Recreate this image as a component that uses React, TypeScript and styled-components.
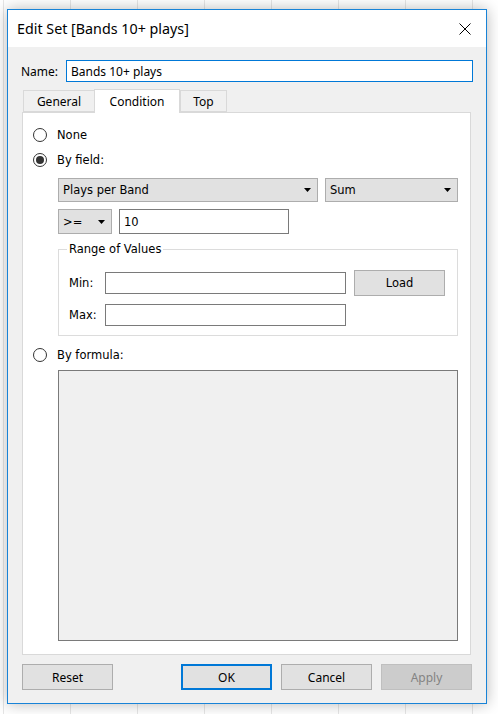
import styled, { createGlobalStyle } from "styled-components";

const GlobalStyle = createGlobalStyle`
  html, body {
    margin: 0;
    padding: 0;
    background: #ffffff;
  }
  * {
    box-sizing: border-box;
  }
`;

const UI_FONT = `"Noto Sans", "Open Sans", sans-serif`;
const FORM_FONT = `"DejaVu Sans", "Liberation Sans", sans-serif`;

const Page = styled.div`
  width: 498px;
  height: 714px;
  padding: 9px 0 0 7px;
  overflow: hidden;
  background-color: #ffffff;
  background-image: repeating-linear-gradient(
    to right,
    transparent 0,
    transparent 3px,
    #e6e6e6 3px,
    #e6e6e6 4px,
    transparent 4px,
    transparent 67px
  );
`;

const Dialog = styled.div`
  width: 480px;
  height: 695px;
  border: 1px solid #1883d7;
  background: #f0f0f0;
  box-shadow: 0 0 14px rgba(0, 0, 0, 0.28);
  display: flex;
  flex-direction: column;
`;

const TitleBar = styled.div`
  height: 37px;
  flex: none;
  background: #ffffff;
  display: flex;
  align-items: center;
  justify-content: space-between;
  padding: 0 15px 0 9px;
  font-family: ${UI_FONT};
  font-size: 14.3px;
  color: #000;
`;

const CloseButton = styled.div`
  width: 12px;
  height: 12px;
  display: flex;
`;

const Body = styled.div`
  flex: 1;
  display: flex;
  flex-direction: column;
  padding: 13px 14px 13px 14px;
`;

const NameRow = styled.div`
  height: 22px;
  display: flex;
  align-items: center;
  margin: 0 -1px 0 -1px;
  font-family: ${UI_FONT};
  font-size: 12px;
`;

const NameLabel = styled.label`
  width: 45px;
  flex: none;
`;

const NameInput = styled.div`
  flex: 1;
  height: 22px;
  border: 1px solid #0078d7;
  background: #fff;
  display: flex;
  align-items: center;
  padding-left: 4px;
`;

const TabStrip = styled.div`
  margin-top: 6px;
  height: 24px;
  display: flex;
  align-items: flex-end;
  padding-left: 1px;
  font-family: ${UI_FONT};
  font-size: 12px;
`;

const Tab = styled.div<{ $active?: boolean; $width: number }>`
  width: ${(p) => p.$width}px;
  height: ${(p) => (p.$active ? 24 : 22)}px;
  display: flex;
  align-items: center;
  justify-content: center;
  background: ${(p) => (p.$active ? "#ffffff" : "#f0f0f0")};
  border: 1px solid #d9d9d9;
  border-bottom: ${(p) => (p.$active ? "none" : "1px solid #d9d9d9")};
  margin-left: ${(p) => (p.$active ? -1 : 0)}px;
  margin-bottom: ${(p) => (p.$active ? -1 : 0)}px;
  position: relative;
  z-index: ${(p) => (p.$active ? 2 : 1)};
  padding-top: ${(p) => (p.$active ? 0 : 1)}px;
`;

const Panel = styled.div`
  height: 543px;
  margin-right: 1px;
  background: #ffffff;
  border: 1px solid #d9d9d9;
  display: flex;
  flex-direction: column;
  padding: 12px 12px 13px 11px;
  font-family: ${FORM_FONT};
  font-size: 11.5px;
  color: #000;
`;

const RadioRow = styled.label<{ $top?: number }>`
  height: 20px;
  margin-top: ${(p) => p.$top ?? 0}px;
  display: flex;
  align-items: center;
  gap: 10px;
`;

const RadioCircle = styled.span<{ $checked?: boolean }>`
  width: 14px;
  height: 14px;
  flex: none;
  border-radius: 50%;
  border: 1px solid #333333;
  background: #ffffff;
  display: flex;
  align-items: center;
  justify-content: center;
  margin-left: -1px;
  margin-right: 0;
  &::after {
    content: "";
    display: ${(p) => (p.$checked ? "block" : "none")};
    width: 8px;
    height: 8px;
    border-radius: 50%;
    background: #333333;
  }
`;

const Indented = styled.div<{ $top: number }>`
  margin-left: 24px;
  margin-top: ${(p) => p.$top}px;
  display: flex;
  gap: 7px;
`;

const Select = styled.div<{ $width?: number; $height?: number }>`
  ${(p) => (p.$width ? `width: ${p.$width}px; flex: none;` : "flex: 1;")}
  height: ${(p) => p.$height ?? 24}px;
  background: #e1e1e1;
  border: 1px solid #adadad;
  display: flex;
  align-items: center;
  justify-content: space-between;
  padding: 0 6px 0 4px;
`;

const Arrow = () => (
  <svg width="7" height="4" viewBox="0 0 7 4">
    <path d="M0 0 H7 L3.5 4 Z" fill="#000" />
  </svg>
);

const TextBox = styled.div<{ $width?: number; $height?: number }>`
  ${(p) => (p.$width ? `width: ${p.$width}px; flex: none;` : "flex: 1;")}
  height: ${(p) => p.$height ?? 22}px;
  background: #ffffff;
  border: 1px solid #7a7a7a;
  display: flex;
  align-items: center;
  padding-left: 4px;
`;

const Group = styled.fieldset`
  margin: 8px 0 0 24px;
  padding: 16px 12px 9px 10px;
  border: 1px solid #dcdcdc;
  min-width: 0;
  display: flex;
  flex-direction: column;
  gap: 10px;
`;

const Legend = styled.legend`
  padding: 0 2px;
  margin-left: -2px;
  line-height: 14px;
`;

const FieldRow = styled.div`
  display: flex;
  align-items: center;
  height: 22px;
`;

const FieldLabel = styled.span`
  width: 36px;
  flex: none;
`;

const PushButton = styled.div<{ $primary?: boolean; $disabled?: boolean }>`
  width: 91px;
  height: 26px;
  flex: none;
  display: flex;
  align-items: center;
  justify-content: center;
  font-family: ${UI_FONT};
  font-size: 12px;
  color: ${(p) => (p.$disabled ? "#838383" : "#000")};
  background: ${(p) => (p.$disabled ? "#cccccc" : "#e1e1e1")};
  border: ${(p) =>
    p.$primary ? "2px solid #0078d7" : p.$disabled ? "1px solid #bfbfbf" : "1px solid #adadad"};
`;

const LoadButton = styled(PushButton)`
  margin-left: 8px;
  font-family: ${FORM_FONT};
  font-size: 11.5px;
`;

const FormulaBox = styled.div`
  margin: 5px 0 0 24px;
  flex: 1;
  background: #f0f0f0;
  border: 1px solid #7a7a7a;
`;

const ButtonBar = styled.div`
  margin-top: 9px;
  display: flex;
  gap: 9px;
`;

const Spacer = styled.div`
  flex: 1;
`;

export default function App() {
  return (
    <>
      <GlobalStyle />
      <Page>
        <Dialog>
          <TitleBar>
            <span>Edit Set [Bands 10+ plays]</span>
            <CloseButton>
              <svg width="12" height="12" viewBox="0 0 12 12">
                <path d="M0.5 0.5 L11.5 11.5 M11.5 0.5 L0.5 11.5" stroke="#000" strokeWidth="1" />
              </svg>
            </CloseButton>
          </TitleBar>
          <Body>
            <NameRow>
              <NameLabel>Name:</NameLabel>
              <NameInput>Bands 10+ plays</NameInput>
            </NameRow>
            <TabStrip>
              <Tab $width={72}>General</Tab>
              <Tab $width={86} $active>
                Condition
              </Tab>
              <Tab $width={47}>Top</Tab>
            </TabStrip>
            <Panel>
              <RadioRow>
                <RadioCircle />
                None
              </RadioRow>
              <RadioRow $top={5}>
                <RadioCircle $checked />
                By field:
              </RadioRow>
              <Indented $top={8}>
                <Select>
                  Plays per Band
                  <Arrow />
                </Select>
                <Select $width={133}>
                  Sum
                  <Arrow />
                </Select>
              </Indented>
              <Indented $top={7}>
                <Select $width={54} $height={25}>
                  &gt;=
                  <Arrow />
                </Select>
                <TextBox $width={170} $height={25}>
                  10
                </TextBox>
              </Indented>
              <Group>
                <Legend>Range of Values</Legend>
                <FieldRow>
                  <FieldLabel>Min:</FieldLabel>
                  <TextBox $width={241} />
                  <LoadButton>Load</LoadButton>
                </FieldRow>
                <FieldRow>
                  <FieldLabel>Max:</FieldLabel>
                  <TextBox $width={241} />
                </FieldRow>
              </Group>
              <RadioRow $top={9}>
                <RadioCircle />
                By formula:
              </RadioRow>
              <FormulaBox />
            </Panel>
            <ButtonBar>
              <PushButton>Reset</PushButton>
              <Spacer />
              <PushButton $primary>OK</PushButton>
              <PushButton>Cancel</PushButton>
              <PushButton $disabled>Apply</PushButton>
            </ButtonBar>
          </Body>
        </Dialog>
      </Page>
    </>
  );
}
